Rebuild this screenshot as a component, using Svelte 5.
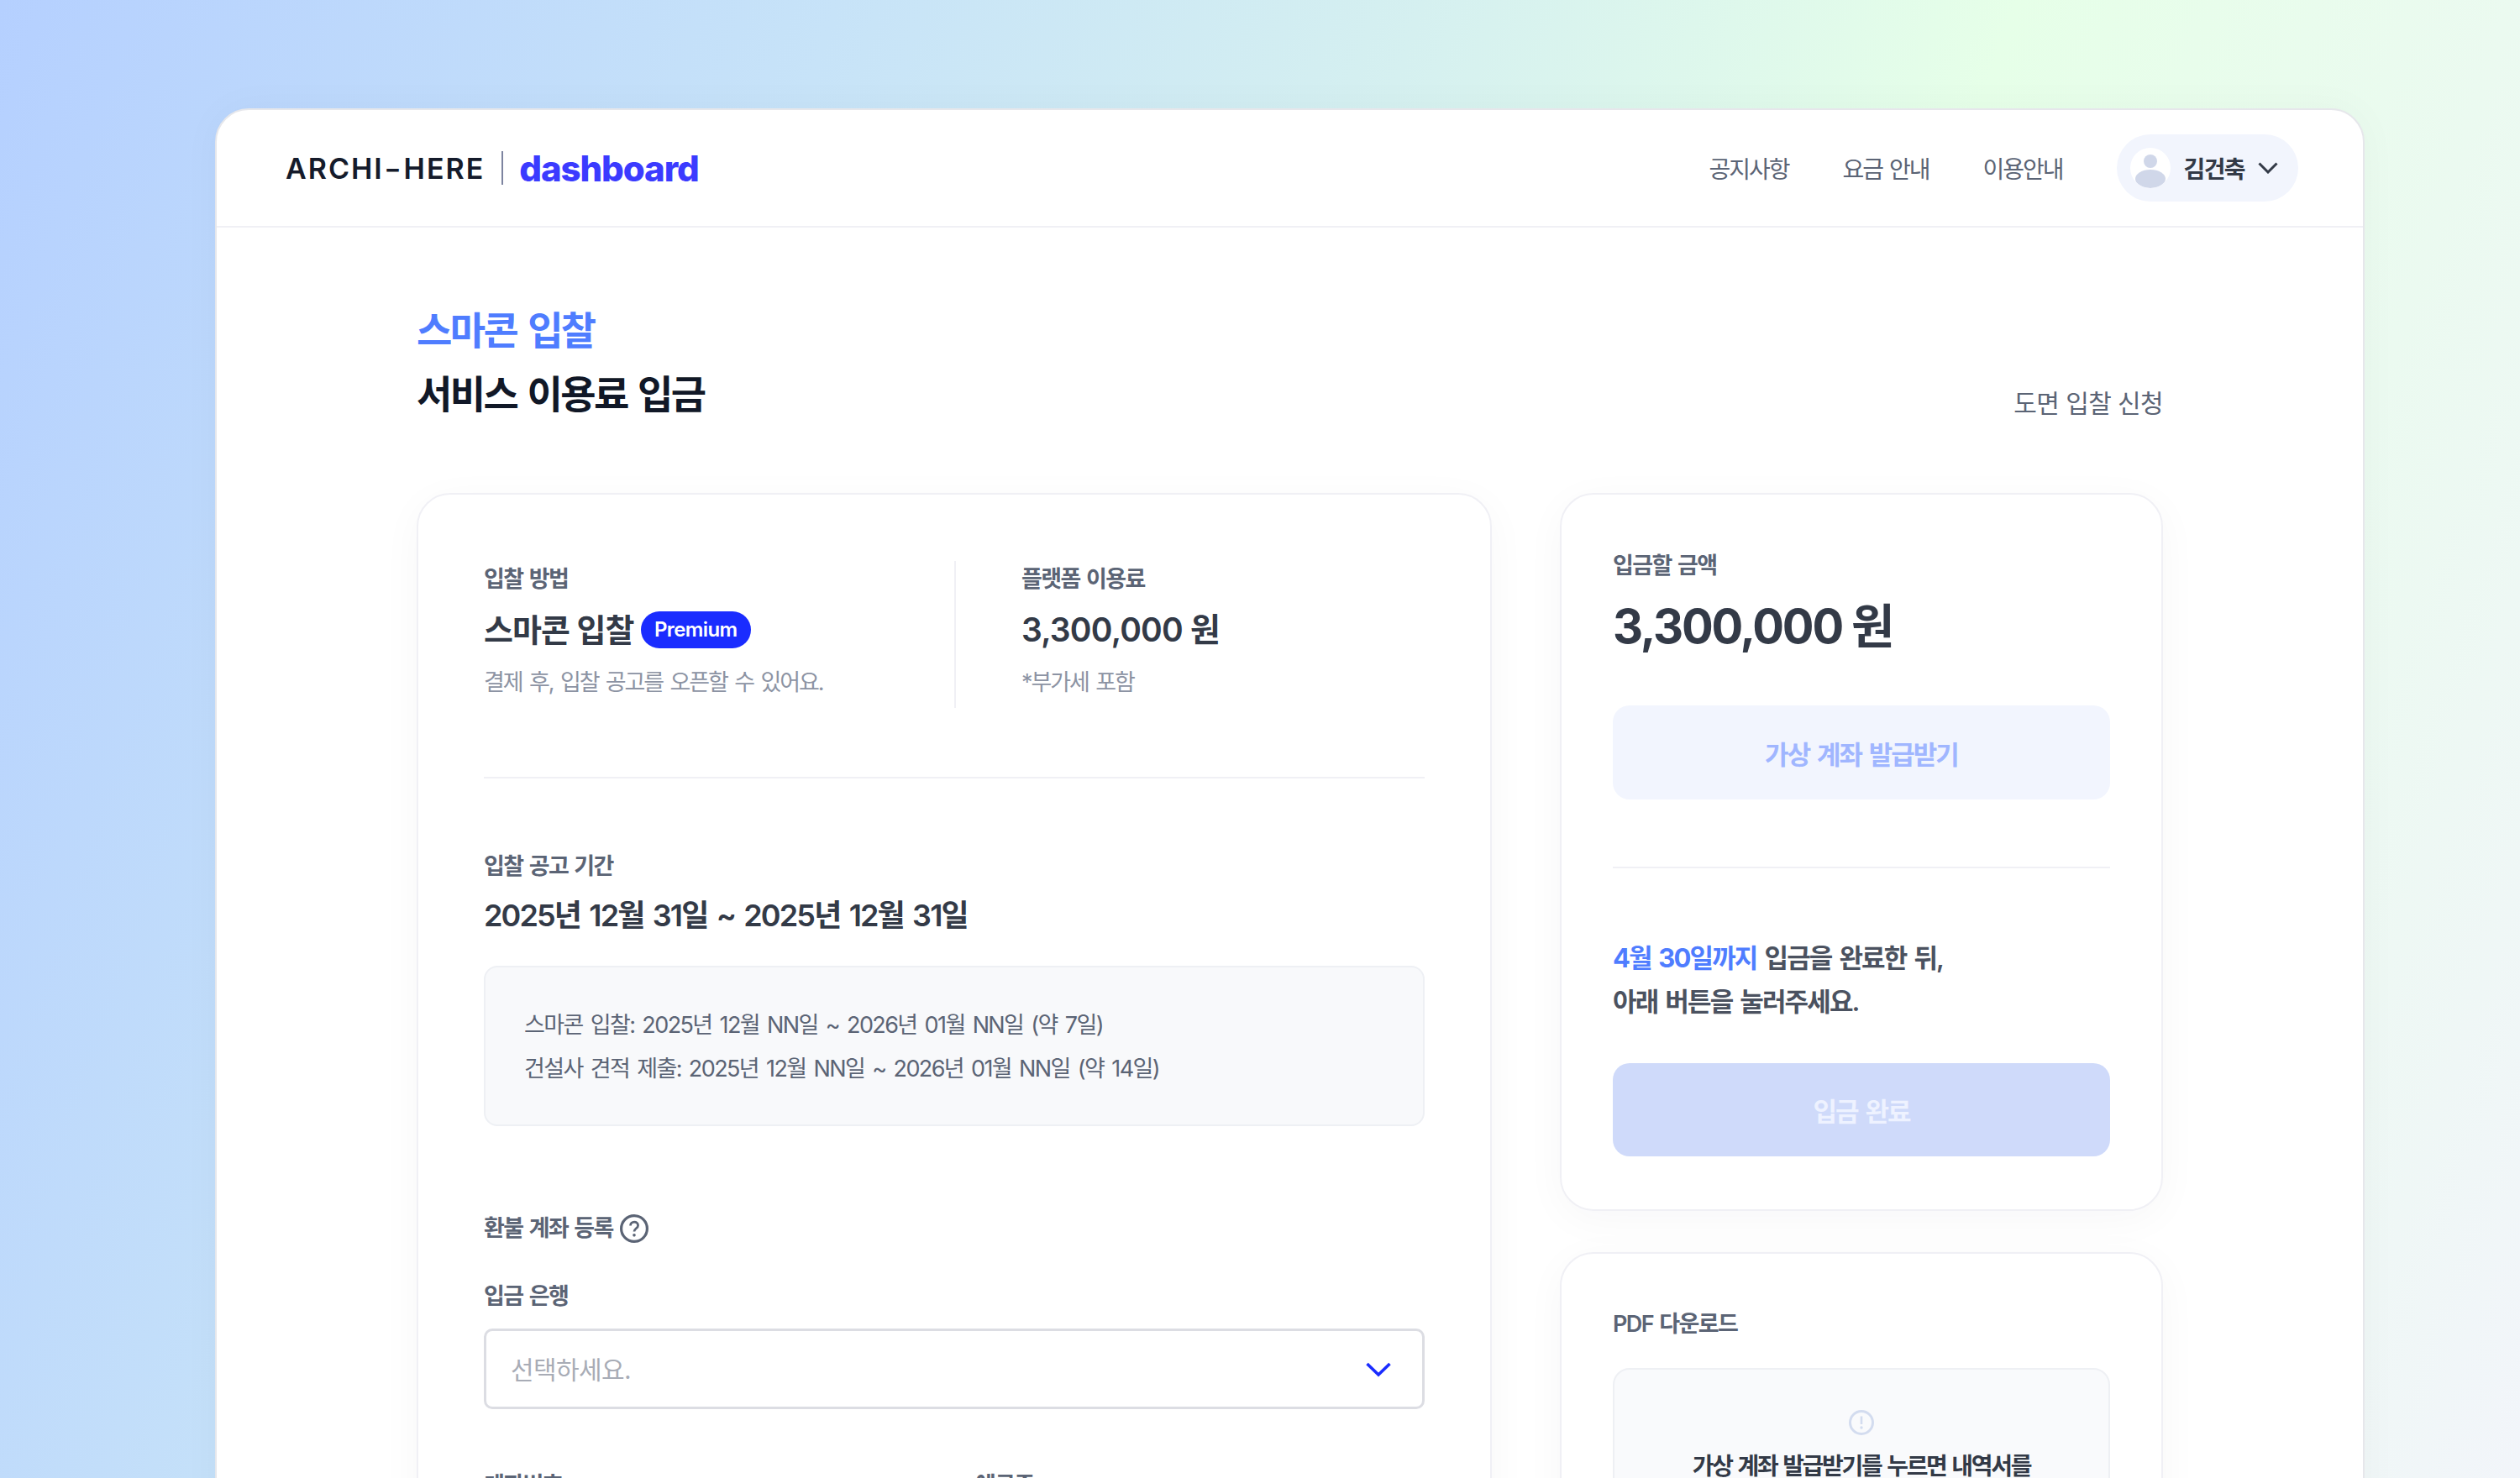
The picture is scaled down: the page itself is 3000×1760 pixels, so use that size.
<script>
  let navItems = ["공지사항", "요금 안내", "이용안내"];
  let periods = [
    "스마콘 입찰: 2025년 12월 NN일 ~ 2026년 01월 NN일 (약 7일)",
    "건설사 견적 제출: 2025년 12월 NN일 ~ 2026년 01월 NN일 (약 14일)"
  ];
</script>

<div class="page">
  <div class="shell">
    <header class="topbar">
      <div class="logo">
        <span class="brand">ARCHI<span class="hy">-</span>HERE</span>
        <span class="logo-div"></span>
        <span class="dash">dashboard</span>
      </div>
      <nav class="nav">
        {#each navItems as item}
          <span>{item}</span>
        {/each}
        <div class="user">
          <svg class="avatar" width="48" height="48" viewBox="0 0 48 48">
            <defs><clipPath id="av"><circle cx="24" cy="24" r="24" /></clipPath></defs>
            <circle cx="24" cy="24" r="24" fill="#fff" />
            <g clip-path="url(#av)" fill="#d0d7e9">
              <circle cx="24" cy="16" r="8" />
              <ellipse cx="24" cy="37" rx="18" ry="11" />
            </g>
          </svg>
          <span class="uname">김건축</span>
          <svg width="24" height="14" viewBox="0 0 24 14" fill="none">
            <path d="M1.5 1.5 12 12 22.5 1.5" stroke="#333a47" stroke-width="3" />
          </svg>
        </div>
      </nav>
    </header>

    <main class="main">
      <div class="titles">
        <div>
          <h2 class="kicker">스마콘 입찰</h2>
          <h1 class="title">서비스 이용료 입금</h1>
        </div>
        <span class="apply">도면 입찰 신청</span>
      </div>

      <div class="columns">
        <section class="card left">
          <div class="summary">
            <div class="sum-a">
              <div class="label">입찰 방법</div>
              <div class="value">스마콘 입찰 <span class="badge">Premium</span></div>
              <div class="sub">결제 후, 입찰 공고를 오픈할 수 있어요.</div>
            </div>
            <div class="sum-b">
              <div class="label">플랫폼 이용료</div>
              <div class="value">3,300,000 원</div>
              <div class="sub">*부가세 포함</div>
            </div>
          </div>
          <hr class="rule" />

          <div class="label period-label">입찰 공고 기간</div>
          <div class="dates">2025년 12월 31일 ~ 2025년 12월 31일</div>
          <div class="period-box">
            {#each periods as p}
              <div>{p}</div>
            {/each}
          </div>

          <div class="label refund">
            환불 계좌 등록
            <svg width="34" height="34" viewBox="0 0 32 32" fill="none">
              <circle cx="16" cy="16" r="14.5" stroke="#5b6475" stroke-width="3" />
              <path d="M11.8 12.6c0-2.4 1.9-4 4.3-4s4.2 1.5 4.2 3.8c0 3.4-4.3 3.4-4.3 7" stroke="#5b6475" stroke-width="2.6" />
              <circle cx="16" cy="23.4" r="1.7" fill="#5b6475" />
            </svg>
          </div>
          <div class="label bank">입금 은행</div>
          <div class="select">
            <span class="placeholder">선택하세요.</span>
            <svg width="30" height="18" viewBox="0 0 30 18" fill="none">
              <path d="M1.5 2 15 15 28.5 2" stroke="#1a2cff" stroke-width="3.6" />
            </svg>
          </div>
          <div class="acct">
            <div class="label">계좌번호</div>
            <div class="label">예금주</div>
          </div>
        </section>

        <aside class="side">
          <section class="card pay">
            <div class="label">입금할 금액</div>
            <div class="amount">3,300,000 원</div>
            <button class="btn soft">가상 계좌 발급받기</button>
            <hr class="rule r2" />
            <p class="notice"><b>4월 30일까지</b> 입금을 완료한 뒤,<br />아래 버튼을 눌러주세요.</p>
            <button class="btn done">입금 완료</button>
          </section>
          <section class="card pdf">
            <div class="label">PDF 다운로드</div>
            <div class="pdf-box">
              <svg width="30" height="30" viewBox="0 0 30 30" fill="none">
                <circle cx="15" cy="15" r="13.5" stroke="#d3dcef" stroke-width="3" />
                <path d="M15 7.5v9.5" stroke="#d3dcef" stroke-width="2.6" />
                <circle cx="15" cy="21" r="1.7" fill="#d3dcef" />
              </svg>
              <div class="pdf-text">가상 계좌 발급받기를 누르면 내역서를</div>
            </div>
          </section>
        </aside>
      </div>
    </main>
  </div>
</div>

<style>
  :global(body) {
    margin: 0;
  }

  .page {
    height: 1760px;
    overflow: hidden;
    box-sizing: border-box;
    padding: 129px 185px 0 256px;
    background: linear-gradient(109deg, #b5d0ff 0%, #c7e3f8 27.7%, #d5f0f0 47%, #e6ffe8 66.6%, #ebfaf0 83%, #f2f5fa 100%);
    font-family: Inter, "Noto Sans CJK KR", sans-serif;
    color: #333a47;
  }

  .shell {
    background: #fff;
    border: 2px solid #e6e7eb;
    border-radius: 40px;
    box-shadow: 0 0 50px rgba(0, 0, 0, 0.03);
    min-height: 1800px;
  }

  .topbar {
    height: 138px;
    box-sizing: content-box;
    border-bottom: 2px solid #f0f0f5;
    display: flex;
    align-items: center;
    justify-content: space-between;
    padding: 0 77px 0 82px;
  }

  .logo {
    display: flex;
    align-items: center;
  }

  .brand {
    font-size: 34px;
    font-weight: 600;
    letter-spacing: 2px;
    color: #151b2b;
  }

  .hy {
    display: inline-block;
    transform: scaleX(1.3);
    margin: 0 3px;
  }

  .logo-div {
    width: 2px;
    height: 40px;
    background: #7d84a0;
    margin: 0 19px 0 20px;
  }

  .dash {
    font-size: 42px;
    font-weight: 800;
    letter-spacing: -1.1px;
    color: #3b3bff;
  }

  .nav {
    display: flex;
    align-items: center;
    gap: 64px;
    font-size: 28px;
    color: #5b6475;
    letter-spacing: -2px;
    word-spacing: 2px;
  }

  .user {
    display: flex;
    align-items: center;
    height: 80px;
    padding: 0 24px 0 16px;
    border-radius: 40px;
    background: #f2f5fd;
  }

  .uname {
    font-weight: 700;
    color: #333a47;
    margin: 0 16px;
    letter-spacing: -1.6px;
  }

  .main {
    padding: 92px 238px 0 238px;
  }

  .titles {
    display: flex;
    justify-content: space-between;
    align-items: flex-end;
  }

  .kicker,
  .title {
    margin: 0;
    font-size: 46px;
    line-height: 60px;
    letter-spacing: -2.6px;
    word-spacing: 4px;
  }

  .kicker {
    font-weight: 600;
    color: #4f7dff;
    margin-bottom: 16px;
  }

  .title {
    font-weight: 700;
    color: #111827;
  }

  .apply {
    font-size: 30px;
    line-height: 40px;
    color: #5b6475;
    letter-spacing: -0.6px;
    margin-bottom: -1px;
  }

  .columns {
    display: flex;
    justify-content: space-between;
    align-items: flex-start;
    margin-top: 88px;
  }

  .card {
    background: #fff;
    border: 2px solid #f0f0f5;
    border-radius: 40px;
    box-shadow: 0 10px 50px rgba(20, 30, 60, 0.035);
  }

  .left {
    width: 1280px;
    box-sizing: border-box;
    padding: 79px 78px 0 78px;
    min-height: 1300px;
  }

  .label {
    font-size: 27px;
    line-height: 40px;
    font-weight: 600;
    color: #5b6475;
    letter-spacing: -1.6px;
    word-spacing: 2px;
  }

  .summary {
    display: flex;
    height: 175px;
  }

  .sum-a,
  .sum-b {
    padding-top: 2px;
  }

  .sum-a {
    width: 560px;
    border-right: 2px solid #f0f0f5;
  }

  .sum-b {
    padding-left: 78px;
  }

  .value {
    display: flex;
    align-items: center;
    font-size: 38px;
    line-height: 54px;
    font-weight: 600;
    letter-spacing: -1px;
    margin-top: 13px;
    white-space: pre;
  }

  .sum-b .value {
    font-size: 39px;
    letter-spacing: -0.8px;
  }

  .badge {
    height: 44px;
    display: flex;
    align-items: center;
    padding: 0 16px;
    border-radius: 22px;
    background: #1a2cff;
    color: #fff;
    font-size: 24px;
    letter-spacing: -0.6px;
  }

  .sub {
    font-size: 27px;
    line-height: 40px;
    color: #8c93a3;
    letter-spacing: -2.1px;
    word-spacing: 3px;
    margin-top: 16px;
  }

  .rule {
    border: 0;
    height: 2px;
    background: #f0f0f5;
    margin: 82px 0 0;
  }

  .period-label {
    margin-top: 85px;
  }

  .dates {
    font-size: 36px;
    line-height: 52px;
    font-weight: 600;
    letter-spacing: -1.85px;
    word-spacing: 3px;
    margin-top: 12px;
  }

  .period-box {
    margin-top: 34px;
    padding: 43px 46px 40px;
    background: #f8f9fb;
    border: 2px solid #eef0f4;
    border-radius: 16px;
    font-size: 27px;
    line-height: 52px;
    color: #5b6475;
    letter-spacing: -1.6px;
    word-spacing: 3px;
  }

  .refund {
    display: flex;
    align-items: center;
    gap: 8px;
    margin-top: 102px;
  }

  .bank {
    margin-top: 41px;
  }

  .select {
    margin-top: 18px;
    height: 96px;
    box-sizing: border-box;
    border: 3px solid #dcdde3;
    border-radius: 10px;
    display: flex;
    align-items: center;
    justify-content: space-between;
    padding: 0 37px 0 29px;
    font-size: 30px;
    color: #a8acb6;
    letter-spacing: -0.6px;
  }

  .placeholder {
    margin-bottom: 2px;
  }

  .select svg {
    margin-top: 2px;
  }

  .acct {
    display: grid;
    grid-template-columns: 585px 1fr;
    margin-top: 71px;
  }

  .side {
    width: 718px;
    display: flex;
    flex-direction: column;
    gap: 49px;
  }

  .pay {
    padding: 65px 61px 63px;
  }

  .amount {
    font-size: 56px;
    line-height: 72px;
    font-weight: 700;
    letter-spacing: -2.2px;
    margin-top: 16px;
  }

  .btn {
    display: block;
    width: 100%;
    border: 0;
    font-family: inherit;
    font-size: 31px;
    font-weight: 600;
    letter-spacing: -2px;
    word-spacing: 3px;
    border-radius: 20px;
  }

  .soft {
    height: 112px;
    margin-top: 58px;
    background: #f2f5fe;
    color: #a0b6ff;
  }

  .r2 {
    margin-top: 80px;
  }

  .notice {
    margin: 81px 0 0;
    font-size: 31px;
    line-height: 52px;
    font-weight: 600;
    color: #4b5260;
    letter-spacing: -1.85px;
    word-spacing: 3px;
  }

  .notice b {
    font-weight: 700;
    color: #4f7dff;
  }

  .done {
    height: 111px;
    margin-top: 47px;
    background: #cfdafa;
    color: #eef2ff;
  }

  .pdf {
    padding: 64px 61px 40px;
  }

  .pdf-box {
    margin-top: 32px;
    padding: 48px 20px 40px;
    background: #f9fafc;
    border: 2px solid #eef0f4;
    border-radius: 20px;
    text-align: center;
  }

  .pdf-box svg {
    display: block;
    margin: 0 auto;
  }

  .pdf-text {
    margin-top: 14px;
    font-size: 28px;
    line-height: 46px;
    font-weight: 600;
    letter-spacing: -2.3px;
    word-spacing: 2px;
  }
</style>
